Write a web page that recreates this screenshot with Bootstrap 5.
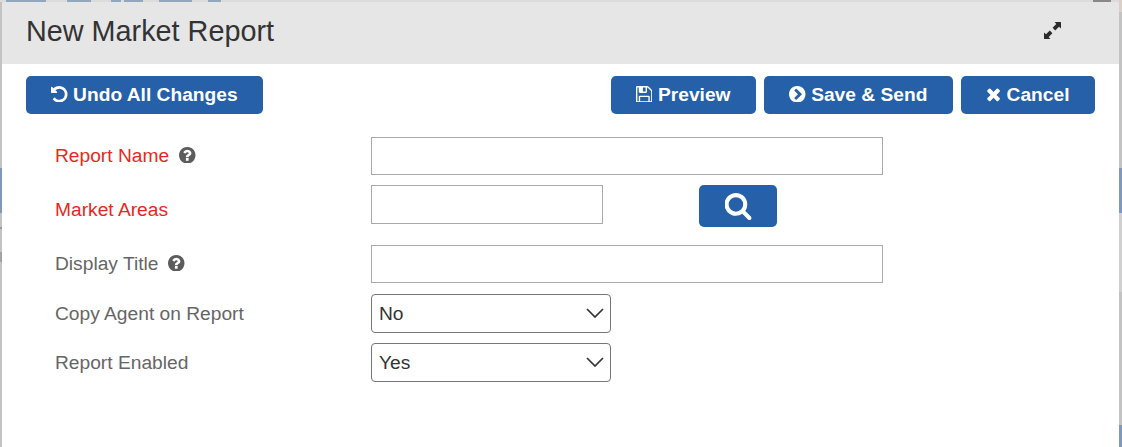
<!DOCTYPE html>
<html lang="en">
<head>
  <meta charset="UTF-8" />
  <meta name="viewport" content="width=device-width, initial-scale=1" />
  <title>New Market Report</title>
  <link href="https://cdn.jsdelivr.net/npm/bootstrap@5.3.3/dist/css/bootstrap.min.css" rel="stylesheet">
  <style>
    body {
      font-family: "Liberation Sans", Arial, sans-serif;
      font-size: 19.2px;
      color: #333;
      height: 447px;
      overflow: hidden;
      padding: 2px 3px 0 2px;
      /* dimmed page behind the dialog */
      background:
        linear-gradient(#8098b9, #8098b9) 0 168px / 2px 45px no-repeat,
        linear-gradient(#999, #999) 0 227px / 2px 2px no-repeat,
        linear-gradient(#a3a3a3, #a3a3a3) 0 252px / 2px 10px no-repeat,
        linear-gradient(#8098b9, #8098b9) 100% 168px / 3px 45px no-repeat,
        linear-gradient(#8098b9, #8098b9) 100% 425px / 3px 22px no-repeat,
        linear-gradient(#d0d0d0, #d0d0d0) 100% 213px / 3px 79px no-repeat,
        linear-gradient(#dccfc7, #d8d0cb) 100% 0 / 3px 12px no-repeat,
        linear-gradient(90deg, #dcdcdc 6px, #94a5be 6px 46px, #dcdcdc 46px 67px, #94a5be 67px 91px, #dcdcdc 91px 111px, #94a5be 111px 121px, #dcdcdc 121px 124px, #94a5be 124px 143px, #dcdcdc 143px 159px, #94a5be 159px 192px, #dcdcdc 192px 208px, #94a5be 208px 221px, #dcdcdc 221px 1093px, #888 1093px 1111px, #dcdcdc 1111px) 0 0 / 1119px 2px no-repeat,
        #c3c3c3;
    }

    .dialog-box {
      height: 445px;
      background-color: #fff;
      border-radius: 2px 2px 0 0;
    }

    .dialog-head {
      height: 62px;
      padding: 0 58px 4px 24px;
      background-color: #e6e6e6;
      border-radius: 2px 2px 0 0;
    }

    .dialog-head h1 {
      font-size: 28.8px;
      line-height: 1;
      font-weight: 400;
    }

    .dialog-head svg {
      margin-bottom: 1px;
    }

    .toolbar-row {
      padding: 12px 24px 0;
    }

    .btn-report {
      --bs-btn-color: #fff;
      --bs-btn-bg: #2560a8;
      --bs-btn-border-width: 0;
      --bs-btn-hover-color: #fff;
      --bs-btn-hover-bg: #1d4e8a;
      --bs-btn-font-size: 19.2px;
      --bs-btn-font-weight: 700;
      --bs-btn-line-height: 1;
      --bs-btn-padding-x: 25px;
      --bs-btn-padding-y: 0;
      --bs-btn-border-radius: 5px;
      height: 38px;
      gap: 5.6px;
    }

    .toolbar-row .btn-report {
      padding-right: 25.5px;
    }

    .toolbar-row svg {
      margin-bottom: 2px;
    }

    .btn-search {
      width: 78px;
      height: 42px;
      margin-left: 96px;
    }

    .report-form {
      padding: 23px 0 0 53px;
    }

    .field-label {
      width: 316px;
      color: #666;
      line-height: 1;
    }

    .field-required {
      color: #e8281e;
    }

    .field-help {
      margin: 0 0 2px 10px;
      fill: #5c5c5c;
    }

    .form-control.field-input {
      width: 512px;
      height: 38px;
      border: 1px solid #a9a9a9;
      border-radius: 0;
    }

    .form-control.field-area {
      width: 232px;
      height: 39px;
    }

    .row-area {
      height: 48px;
      margin: 10px 0 12px;
    }

    .row-area .field-label {
      padding-top: 2px;
    }

    .form-select.field-select {
      width: 240px;
      height: 39px;
      padding: 2px 30px 0 7px;
      border: 1px solid #767676;
      border-radius: 4px;
      font-size: 19.2px;
      color: #333;
      background-image: url("data:image/svg+xml,%3Csvg xmlns='http://www.w3.org/2000/svg' viewBox='0 0 18 10'%3E%3Cpath d='M1 1l8 8 8-8' fill='none' stroke='%23333' stroke-width='1.7'/%3E%3C/svg%3E");
      background-size: 18px 10px;
      background-position: right 6px top 13px;
    }
  </style>
</head>
<body>

<div class="dialog-box">
  <!-- Header -->
  <div class="dialog-head d-flex justify-content-between align-items-center">
    <h1 class="mb-0">New Market Report</h1>
    <svg width="17" height="17" viewBox="0 0 17 17" fill="#2b2b2b">
      <path d="M10.6 0H16.4Q17 0 17 .6V6.4L15 4.7 11.2 8.4 8.6 5.8 12.3 2ZM6.4 17H.6Q0 17 0 16.4V10.6L2 12.3 5.8 8.6 8.4 11.2 4.7 15Z"/>
    </svg>
  </div>

  <!-- Actions -->
  <div class="toolbar-row d-flex">
    <button type="button" class="btn btn-report d-flex align-items-center me-auto">
      <svg width="16.5" height="16.5" viewBox="128 128 1536 1536" fill="currentColor"><path d="M1664 896q0 156-61 298t-164 245-245 164-298 61q-172 0-327-72.5t-264-204.5q-7-10-6.5-22.5t8.5-20.5l137-138q10-9 25-9 16 2 23 12 73 95 179 147t225 52q104 0 198.5-40.5t163.5-109.5 109.5-163.5 40.5-198.5-40.5-198.5-109.5-163.5-163.5-109.5-198.5-40.5q-98 0-188 35.5t-160 101.5l137 138q31 30 14 69-17 40-59 40h-448q-26 0-45-19t-19-45v-448q0-42 40-59 39-17 69 14l130 129q107-101 244.5-156.5t284.5-55.5q156 0 298 61t245 164 164 245 61 298z"/></svg>
      <span>Undo All Changes</span>
    </button>
    <div class="d-flex gap-2">
      <button type="button" class="btn btn-report d-flex align-items-center">
        <svg width="16.5" height="16.5" viewBox="128 128 1536 1536" fill="currentColor"><path d="M512 1536h768v-384h-768v384zm896 0h128v-896q0-14-10-38.5t-20-34.5l-281-281q-10-10-34-20t-39-10v416q0 40-28 68t-68 28h-576q-40 0-68-28t-28-68v-416h-128v1280h128v-416q0-40 28-68t68-28h832q40 0 68 28t28 68v416zm-384-928v-320q0-13-9.5-22.5t-22.5-9.5h-192q-13 0-22.5 9.5t-9.5 22.5v320q0 13 9.5 22.5t22.5 9.5h192q13 0 22.5-9.5t9.5-22.5zm640 32v928q0 40-28 68t-68 28h-1344q-40 0-68-28t-28-68v-1344q0-40 28-68t68-28h928q40 0 88 20t76 48l280 280q28 28 48 76t20 88z"/></svg>
        <span>Preview</span>
      </button>
      <button type="button" class="btn btn-report d-flex align-items-center">
        <svg width="16.5" height="16.5" viewBox="128 128 1536 1536" fill="currentColor"><path d="M845 1395l454-454q19-19 19-45t-19-45l-454-454q-19-19-45-19t-45 19l-102 102q-19 19-19 45t19 45l307 307-307 307q-19 19-19 45t19 45l102 102q19 19 45 19t45-19zm819-499q0 209-103 385.5t-279.5 279.5-385.5 103-385.5-103-279.5-279.5-103-385.5 103-385.5 279.5-279.5 385.5-103 385.5 103 279.5 279.5 103 385.5z"/></svg>
        <span>Save &amp; Send</span>
      </button>
      <button type="button" class="btn btn-report d-flex align-items-center">
        <svg width="15.1" height="16.5" viewBox="192 128 1408 1536" fill="currentColor"><path d="M1490 1322q0 40-28 68l-136 136q-28 28-68 28t-68-28l-294-294-294 294q-28 28-68 28t-68-28l-136-136q-28-28-28-68t28-68l294-294-294-294q-28-28-28-68t28-68l136-136q28-28 68-28t68 28l294 294 294-294q28-28 68-28t68 28l136 136q28 28 28 68t-28 68l-294 294 294 294q28 28 28 68z"/></svg>
        <span>Cancel</span>
      </button>
    </div>
  </div>

  <!-- Form -->
  <form class="report-form">
    <div class="d-flex align-items-center">
      <label for="reportName" class="field-label field-required d-flex align-items-center">Report Name
        <svg class="field-help" width="16.5" height="16.5" viewBox="128 128 1536 1536"><path d="M1024 1376v-192q0-14-9-23t-23-9h-192q-14 0-23 9t-9 23v192q0 14 9 23t23 9h192q14 0 23-9t9-23zm256-672q0-88-55.5-163t-138.5-116-170-41q-243 0-371 213-15 24 8 42l132 100q7 6 19 6 16 0 25-12 53-68 86-92 34-24 86-24 48 0 85.5 26t37.5 59q0 38-20 61t-68 45q-63 28-115.5 86.5t-52.5 125.5v36q0 14 9 23t23 9h192q14 0 23-9t9-23q0-19 21.5-49.5t54.5-49.5q32-18 49-28.5t46-35 44.5-48 28-60.5 12.5-81zm384 192q0 209-103 385.5t-279.5 279.5-385.5 103-385.5-103-279.5-279.5-103-385.5 103-385.5 279.5-279.5 385.5-103 385.5 103 279.5 279.5 103 385.5z"/></svg>
      </label>
      <input type="text" id="reportName" class="form-control field-input">
    </div>

    <div class="row-area d-flex align-items-start">
      <label for="marketAreas" class="field-label field-required align-self-center">Market Areas</label>
      <input type="text" id="marketAreas" class="form-control field-input field-area">
      <button type="button" class="btn btn-report btn-search d-flex align-items-center justify-content-center p-0" aria-label="Search">
        <svg width="27" height="27" viewBox="96 128 1664 1664" fill="currentColor"><path d="M1216 832q0-185-131.5-316.5t-316.5-131.5-316.5 131.5-131.5 316.5 131.5 316.5 316.5 131.5 316.5-131.5 131.5-316.5zm512 832q0 52-38 90t-90 38q-54 0-90-38l-343-342q-179 124-399 124-143 0-273.5-55.5t-225-150-150-225-55.5-273.5 55.5-273.5 150-225 225-150 273.5-55.5 273.5 55.5 225 150 150 225 55.5 273.5q0 220-124 399l343 343q37 37 37 90z"/></svg>
      </button>
    </div>

    <div class="d-flex align-items-center">
      <label for="displayTitle" class="field-label d-flex align-items-center">Display Title
        <svg class="field-help" width="16.5" height="16.5" viewBox="128 128 1536 1536"><path d="M1024 1376v-192q0-14-9-23t-23-9h-192q-14 0-23 9t-9 23v192q0 14 9 23t23 9h192q14 0 23-9t9-23zm256-672q0-88-55.5-163t-138.5-116-170-41q-243 0-371 213-15 24 8 42l132 100q7 6 19 6 16 0 25-12 53-68 86-92 34-24 86-24 48 0 85.5 26t37.5 59q0 38-20 61t-68 45q-63 28-115.5 86.5t-52.5 125.5v36q0 14 9 23t23 9h192q14 0 23-9t9-23q0-19 21.5-49.5t54.5-49.5q32-18 49-28.5t46-35 44.5-48 28-60.5 12.5-81zm384 192q0 209-103 385.5t-279.5 279.5-385.5 103-385.5-103-279.5-279.5-103-385.5 103-385.5 279.5-279.5 385.5-103 385.5 103 279.5 279.5 103 385.5z"/></svg>
      </label>
      <input type="text" id="displayTitle" class="form-control field-input">
    </div>

    <div class="d-flex align-items-center" style="margin-top: 11px;">
      <label for="copyAgent" class="field-label">Copy Agent on Report</label>
      <select id="copyAgent" class="form-select field-select">
        <option selected>No</option>
        <option>Yes</option>
      </select>
    </div>

    <div class="d-flex align-items-center" style="margin-top: 10px;">
      <label for="reportEnabled" class="field-label">Report Enabled</label>
      <select id="reportEnabled" class="form-select field-select">
        <option selected>Yes</option>
        <option>No</option>
      </select>
    </div>
  </form>
</div>

<script src="https://cdn.jsdelivr.net/npm/bootstrap@5.3.3/dist/js/bootstrap.bundle.min.js"></script>
</body>
</html>
